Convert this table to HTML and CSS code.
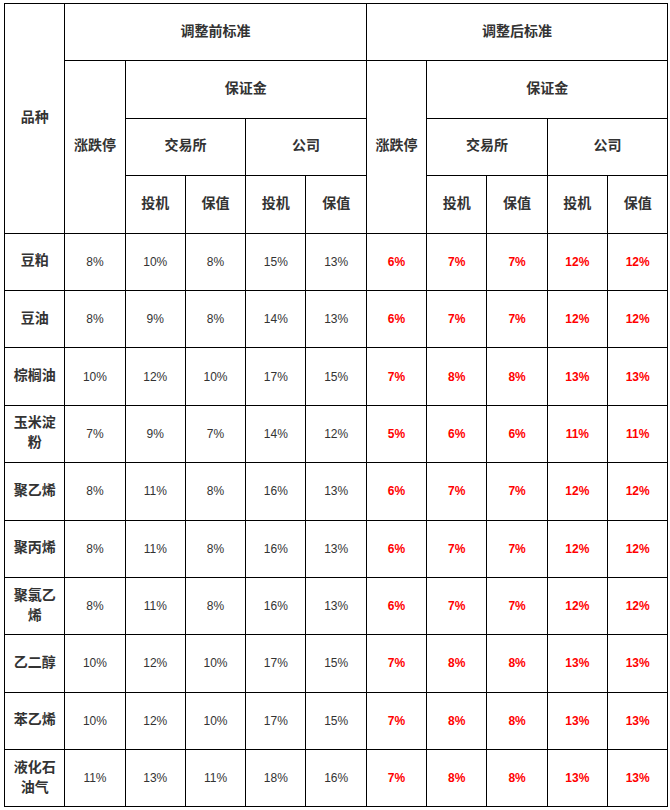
FILE: index.html
```html
<!DOCTYPE html>
<html lang="zh-CN">
<head>
<meta charset="utf-8">
<title>保证金调整</title>
<link rel="stylesheet" href="styles.css">
</head>
<body>
<table class="grid">
  <colgroup>
    <col class="c"><col class="c"><col class="c"><col class="c"><col class="c"><col class="c"><col class="c"><col class="c"><col class="c"><col class="c"><col class="c">
  </colgroup>
  <thead>
    <tr>
      <th rowspan="4">品种</th>
      <th colspan="5">调整前标准</th>
      <th colspan="5">调整后标准</th>
    </tr>
    <tr>
      <th rowspan="3">涨跌停</th>
      <th colspan="4">保证金</th>
      <th rowspan="3">涨跌停</th>
      <th colspan="4">保证金</th>
    </tr>
    <tr>
      <th colspan="2">交易所</th>
      <th colspan="2">公司</th>
      <th colspan="2">交易所</th>
      <th colspan="2">公司</th>
    </tr>
    <tr>
      <th>投机</th><th>保值</th><th>投机</th><th>保值</th>
      <th>投机</th><th>保值</th><th>投机</th><th>保值</th>
    </tr>
  </thead>
  <tbody>
    <tr><th>豆粕</th><td>8%</td><td>10%</td><td>8%</td><td>15%</td><td>13%</td><td class="new">6%</td><td class="new">7%</td><td class="new">7%</td><td class="new">12%</td><td class="new">12%</td></tr>
    <tr><th>豆油</th><td>8%</td><td>9%</td><td>8%</td><td>14%</td><td>13%</td><td class="new">6%</td><td class="new">7%</td><td class="new">7%</td><td class="new">12%</td><td class="new">12%</td></tr>
    <tr><th>棕榈油</th><td>10%</td><td>12%</td><td>10%</td><td>17%</td><td>15%</td><td class="new">7%</td><td class="new">8%</td><td class="new">8%</td><td class="new">13%</td><td class="new">13%</td></tr>
    <tr><th>玉米淀粉</th><td>7%</td><td>9%</td><td>7%</td><td>14%</td><td>12%</td><td class="new">5%</td><td class="new">6%</td><td class="new">6%</td><td class="new">11%</td><td class="new">11%</td></tr>
    <tr><th>聚乙烯</th><td>8%</td><td>11%</td><td>8%</td><td>16%</td><td>13%</td><td class="new">6%</td><td class="new">7%</td><td class="new">7%</td><td class="new">12%</td><td class="new">12%</td></tr>
    <tr><th>聚丙烯</th><td>8%</td><td>11%</td><td>8%</td><td>16%</td><td>13%</td><td class="new">6%</td><td class="new">7%</td><td class="new">7%</td><td class="new">12%</td><td class="new">12%</td></tr>
    <tr><th>聚氯乙烯</th><td>8%</td><td>11%</td><td>8%</td><td>16%</td><td>13%</td><td class="new">6%</td><td class="new">7%</td><td class="new">7%</td><td class="new">12%</td><td class="new">12%</td></tr>
    <tr><th>乙二醇</th><td>10%</td><td>12%</td><td>10%</td><td>17%</td><td>15%</td><td class="new">7%</td><td class="new">8%</td><td class="new">8%</td><td class="new">13%</td><td class="new">13%</td></tr>
    <tr><th>苯乙烯</th><td>10%</td><td>12%</td><td>10%</td><td>17%</td><td>15%</td><td class="new">7%</td><td class="new">8%</td><td class="new">8%</td><td class="new">13%</td><td class="new">13%</td></tr>
    <tr><th>液化石油气</th><td>11%</td><td>13%</td><td>11%</td><td>18%</td><td>16%</td><td class="new">7%</td><td class="new">8%</td><td class="new">8%</td><td class="new">13%</td><td class="new">13%</td></tr>
  </tbody>
</table>
</body>
</html>
```
FILE: styles.css
```css
html, body {
  background: #ffffff;
}
body {
  margin: 3px 0 0 4px;
  font-family: "Liberation Sans", "Noto Sans CJK SC", sans-serif;
  color: #333333;
}
.grid {
  border-collapse: collapse;
  table-layout: fixed;
  width: 664px;
}
.grid .c {
  width: 60.3px;
}
.grid th,
.grid td {
  border: 1px solid #000000;
  height: 57.4px;
  padding: 0 6px;
  text-align: center;
  vertical-align: middle;
  box-sizing: border-box;
}
.grid th {
  padding-bottom: 5px;
  font-family: "Noto Sans CJK SC", sans-serif;
  font-size: 14px;
  font-weight: bold;
  line-height: 20px;
  color: #333333;
}
.grid td {
  font-size: 12px;
  font-weight: normal;
  color: #333333;
}
.grid td.new {
  color: #ff0000;
  font-weight: bold;
}
```
